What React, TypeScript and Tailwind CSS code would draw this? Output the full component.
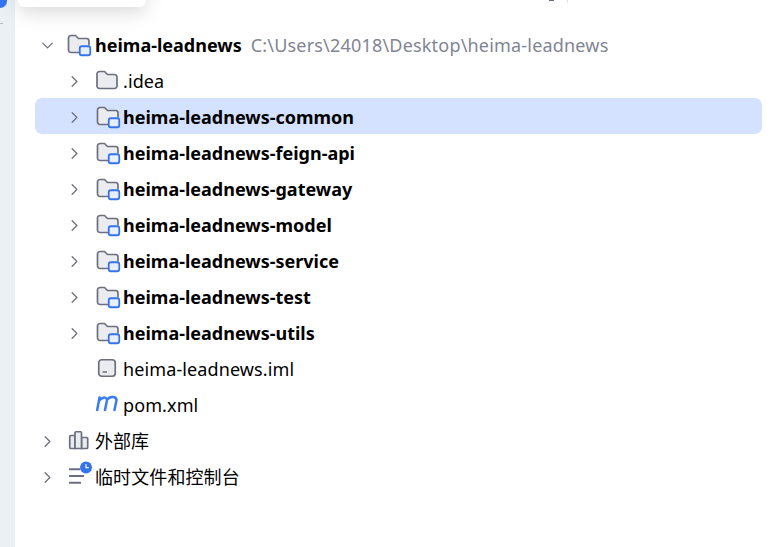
import { ChevronDown, ChevronRight } from 'lucide-react';

const modules = [
  'heima-leadnews-feign-api',
  'heima-leadnews-gateway',
  'heima-leadnews-model',
  'heima-leadnews-service',
  'heima-leadnews-test',
  'heima-leadnews-utils',
];

const FolderIcon = ({ module = false }: { module?: boolean }) => (
  <svg width="24" height="24" viewBox="0 0 24 24" fill="none" className="shrink-0 overflow-visible">
    <path
      d={
        module
          ? 'M12 19.500H4A2.500 2.500 0 0 1 1.500 17V5A2.500 2.500 0 0 1 4 2.500h4.500l3 3h8A2.500 2.500 0 0 1 22 8v4.500'
          : 'M3.500 2.500h5l3 3h7A2.500 2.500 0 0 1 21 8v9a2.500 2.500 0 0 1-2.500 2.500h-15A2.500 2.500 0 0 1 1 17V5A2.500 2.500 0 0 1 3.500 2.500Z'
      }
      fill="#ebecf0"
      stroke="#6c707e"
      strokeWidth="1.700"
    />
    {module && <rect x="12.750" y="13.250" width="10.500" height="9" rx="2" fill="#e7effd" stroke="#3574f0" strokeWidth="1.800" />}
  </svg>
);

const Row = ({
  level = 1,
  arrow = 'right',
  icon,
  active = false,
  children,
}: {
  level?: 0 | 1;
  arrow?: 'right' | 'down' | 'none';
  icon: React.ReactNode;
  active?: boolean;
  children: React.ReactNode;
}) => (
  <div className={`flex h-9 items-center rounded-[7px] pt-[2px] ${active ? 'bg-[#d4e2ff]' : ''}`}>
    <div className={`flex shrink-0 items-center ${level === 0 ? 'w-[32px] pl-[3px]' : 'w-[61px] pl-[30px]'}`}>
      {arrow === 'right' && <ChevronRight size={19} strokeWidth={1.6} className="text-[#6c707e]" />}
      {arrow === 'down' && <ChevronDown size={19} strokeWidth={1.6} className="text-[#6c707e]" />}
    </div>
    <div className={`flex shrink-0 items-center ${level === 0 ? 'w-[28px]' : 'w-[27px]'}`}>{icon}</div>
    {children}
  </div>
);

const ModuleRow = ({ name, active = false }: { name: string; active?: boolean }) => (
  <Row icon={<FolderIcon module />} active={active}>
    <span className="font-bold text-black">{name}</span>
  </Row>
);

const App = () => {
  return (
    <div className="relative flex h-[547px] w-[771px] overflow-hidden bg-white font-['Noto_Sans','Noto_Sans_CJK_SC',sans-serif] text-[18px]">
      {/* left tool strip */}
      <div className="flex w-[15px] shrink-0 flex-col bg-[#eaf0f3]">
        <div className="h-[8px] w-[7px] rounded-br-[7px] bg-[#3574f0]" />
        <div className="mt-[15px] h-px w-[3px] bg-[#b9bcc6]" />
      </div>

      {/* project tree */}
      <div className="flex-1 pt-[26px] pl-[20px] pr-[9px]">
        <Row level={0} arrow="down" icon={<FolderIcon module />}>
          <span className="font-bold text-black">heima-leadnews</span>
          <span className="ml-[9px] tracking-[0.19px] text-[#7f8594]">C:\Users\24018\Desktop\heima-leadnews</span>
        </Row>
        <Row icon={<FolderIcon />}>
          <span className="tracking-[0.1px] text-black">.idea</span>
        </Row>
        <ModuleRow name="heima-leadnews-common" active />
        {modules.map((name) => (
          <ModuleRow key={name} name={name} />
        ))}
        <Row
          arrow="none"
          icon={
            <svg width="24" height="24" viewBox="0 0 24 24" fill="none">
              <rect x="2.750" y="2.750" width="16.500" height="16.500" rx="3" fill="#ebecf0" stroke="#6c707e" strokeWidth="1.700" />
              <path d="M6.500 15h4.500" stroke="#6c707e" strokeWidth="1.500" />
            </svg>
          }
        >
          <span className="tracking-[0.11px] text-black">heima-leadnews.iml</span>
        </Row>
        <Row
          arrow="none"
          icon={
            <svg width="24" height="24" viewBox="0 0 24 24" fill="none">
              <path
                d="M1.200 17 3.500 4.500M3 8C5 4.500 10.500 3 11 7L9 17M11 7C13 3.500 20 2.500 20.500 7L18.500 17"
                stroke="#3b7cf5"
                strokeWidth="2.500"
                strokeLinecap="round"
                strokeLinejoin="round"
              />
            </svg>
          }
        >
          <span className="tracking-[0.1px] text-black">pom.xml</span>
        </Row>
        <Row
          level={0}
          icon={
            <svg width="24" height="24" viewBox="0 0 24 24" fill="#ebecf0" stroke="#6c707e" strokeWidth="1.700">
              <path d="M8 6.500H3.750a1 1 0 0 0-1 1V18.500a1 1 0 0 0 1 1H8Z" />
              <path d="M14.500 8.500H19.700a1 1 0 0 1 1 1v9a1 1 0 0 1-1 1H14.500Z" />
              <path d="M9 2.750h4.500a1 1 0 0 1 1 1V19.500H8V3.750a1 1 0 0 1 1-1Z" />
            </svg>
          }
        >
          <span className="text-black">外部库</span>
        </Row>
        <Row
          level={0}
          icon={
            <svg width="24" height="24" viewBox="0 0 24 24" fill="none" className="overflow-visible">
              <path d="M2 4.300h11M2 11h15M2 17.700h12" stroke="#6c707e" strokeWidth="1.900" />
              <circle cx="19" cy="2.500" r="6" fill="#3574f0" />
              <path d="M19 -0.800v3.500h2.700" stroke="#fff" strokeWidth="1.200" />
            </svg>
          }
        >
          <span className="tracking-[0.1px] text-black">临时文件和控制台</span>
        </Row>
      </div>

      {/* popup edge poking in from the top */}
      <div className="absolute left-[18px] top-[-20px] h-[27px] w-[128px] rounded-md bg-white shadow-[0_6px_18px_rgba(0,0,0,0.14)]" />
      {/* toolbar remnants */}
      <div className="absolute left-[549px] top-0 h-px w-[5px] bg-[#6c707e]" />
      <div className="absolute left-[567px] top-0 h-[3px] w-px bg-[#dfe1e5]" />
    </div>
  );
};

export default App;
